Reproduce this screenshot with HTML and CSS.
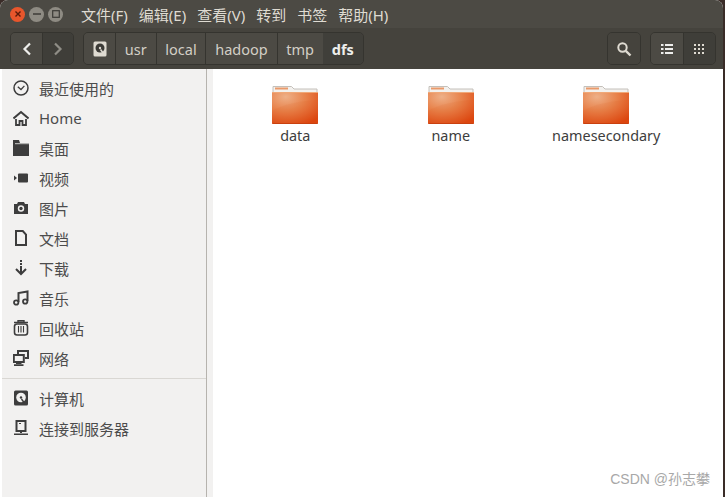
FILE: index.html
```html
<!DOCTYPE html>
<html lang="en">
<head>
    <meta charset="UTF-8">
    <title>dfs</title>
    <link rel="stylesheet" href="styles.css">
</head>
<body>
    <div class="window">
        <header class="menubar">
            <div class="win-btns">
                <span class="win-btn close"><svg width="8" height="8" viewBox="0 0 8 8"><path d="M1.5 1.5l5 5M6.5 1.5l-5 5" stroke="#5a1a0a" stroke-width="1.4"/></svg></span>
                <span class="win-btn"><svg width="8" height="8" viewBox="0 0 8 8"><path d="M0 4h8" stroke="#3c3b37" stroke-width="1.4"/></svg></span>
                <span class="win-btn"><svg width="8" height="8" viewBox="0 0 8 8"><rect x=".7" y=".7" width="6.6" height="6.6" fill="none" stroke="#3c3b37" stroke-width="1.2"/></svg></span>
            </div>
            <nav class="menu">
                <span>文件(F)</span>
                <span>编辑(E)</span>
                <span>查看(V)</span>
                <span>转到</span>
                <span>书签</span>
                <span>帮助(H)</span>
            </nav>
        </header>

        <div class="toolbar">
            <div class="btn-group nav-btns">
                <button class="tool-btn"><svg width="10" height="14" viewBox="0 0 10 14"><path d="M8 1.5L2.5 7 8 12.5" fill="none" stroke="#eeeeec" stroke-width="2.2"/></svg></button>
                <button class="tool-btn dim"><svg width="10" height="14" viewBox="0 0 10 14"><path d="M2 1.5L7.5 7 2 12.5" fill="none" stroke="#8f8d86" stroke-width="2.2"/></svg></button>
            </div>
            <div class="btn-group path">
                <button class="crumb disk"><svg width="14" height="16" viewBox="0 0 14 16"><rect x=".5" y=".5" width="13" height="15" rx="1.5" fill="#dfdbd2"/><circle cx="7" cy="7" r="4.5" fill="#3c3b37"/><circle cx="7" cy="7" r="1.2" fill="#dfdbd2"/><path d="M7.5 8.5l3 4" stroke="#dfdbd2" stroke-width="1.5"/></svg></button>
                <button class="crumb">usr</button>
                <button class="crumb">local</button>
                <button class="crumb">hadoop</button>
                <button class="crumb">tmp</button>
                <button class="crumb current">dfs</button>
            </div>
            <div class="spacer"></div>
            <div class="btn-group search">
                <button class="tool-btn"><svg width="16" height="16" viewBox="0 0 16 16"><circle cx="6.5" cy="6.5" r="4.2" fill="none" stroke="#dfdbd2" stroke-width="2"/><path d="M9.8 9.8L14.5 14.5" stroke="#dfdbd2" stroke-width="2.4"/></svg></button>
            </div>
            <div class="btn-group views">
                <button class="tool-btn"><svg width="12" height="10" viewBox="0 0 12 10" fill="#eeeeec"><rect x="0" y="0" width="2.5" height="2"/><rect x="4" y="0" width="8" height="2"/><rect x="0" y="4" width="2.5" height="2"/><rect x="4" y="4" width="8" height="2"/><rect x="0" y="8" width="2.5" height="2"/><rect x="4" y="8" width="8" height="2"/></svg></button>
                <button class="tool-btn dim"><svg width="11" height="10" viewBox="0 0 11 10" fill="#dfdbd2"><rect x="0" y="0" width="2" height="2"/><rect x="4" y="0" width="2" height="2"/><rect x="8" y="0" width="2" height="2"/><rect x="0" y="4" width="2" height="2"/><rect x="4" y="4" width="2" height="2"/><rect x="8" y="4" width="2" height="2"/><rect x="0" y="8" width="2" height="2"/><rect x="4" y="8" width="2" height="2"/><rect x="8" y="8" width="2" height="2"/></svg></button>
            </div>
        </div>

        <div class="content">
            <aside class="sidebar">
                <ul class="places">
                    <li><svg viewBox="0 0 16 16"><circle cx="8" cy="8" r="7" fill="none" stroke="#3d3d3d" stroke-width="1.5"/><path d="M4.8 6.8L8 9.5l3.4-3.6" fill="none" stroke="#3d3d3d" stroke-width="1.3"/></svg>最近使用的</li>
                    <li><svg viewBox="0 0 16 16"><path d="M0.5 8.5L8 2l7.5 6.5" fill="none" stroke="#3d3d3d" stroke-width="2"/><path d="M3 9v6h3.5v-4h3v4H13V9" fill="none" stroke="#3d3d3d" stroke-width="1.8"/></svg>Home</li>
                    <li><svg viewBox="0 0 16 16"><path d="M0 0h6l1 3h9v13H0z" fill="#3d3d3d"/><path d="M2 3.700h14" stroke="#f2f1f0" stroke-width=".8"/></svg>桌面</li>
                    <li><svg viewBox="0 0 16 16"><path d="M1 5.500l3 2.500-3 2.500z" fill="#3d3d3d"/><rect x="5" y="3.500" width="10" height="9" rx="1" fill="#3d3d3d"/></svg>视频</li>
                    <li><svg viewBox="0 0 16 16"><path d="M1 4h3l1-2h6l1 2h3v10H1z" fill="#3d3d3d"/><circle cx="8" cy="8.500" r="3.200" fill="#f2f1f0"/><circle cx="8" cy="8.500" r="1.700" fill="#3d3d3d"/></svg>图片</li>
                    <li><svg viewBox="0 0 16 16"><path d="M3 1h6.800l3.200 3.600V15H3z" fill="none" stroke="#3d3d3d" stroke-width="2"/></svg>文档</li>
                    <li><svg viewBox="0 0 16 16"><path d="M7 0h2v2H7zM7 3h2v2H7z" fill="#3d3d3d"/><path d="M8 6v7M3 9l5 5 5-5" fill="none" stroke="#3d3d3d" stroke-width="2"/></svg>下载</li>
                    <li><svg viewBox="0 0 16 16"><path d="M5.500 12V3l9-1.500V11" fill="none" stroke="#3d3d3d" stroke-width="2"/><circle cx="3.200" cy="12.500" r="2.200" fill="none" stroke="#3d3d3d" stroke-width="1.800"/><circle cx="12.200" cy="11.500" r="2.200" fill="none" stroke="#3d3d3d" stroke-width="1.800"/></svg>音乐</li>
                    <li><svg viewBox="0 0 16 16"><path d="M5 2V0.700h6V2M1 2.500h14" fill="none" stroke="#3d3d3d" stroke-width="1.400"/><rect x="1.500" y="4" width="13" height="11" rx="2.500" fill="none" stroke="#3d3d3d" stroke-width="1.600"/><path d="M5.500 6v6.500M8 6v6.500M10.500 6v6.500" stroke="#3d3d3d" stroke-width="1.100"/></svg>回收站</li>
                    <li><svg viewBox="0 0 16 16"><rect x="0.800" y="5" width="10" height="7" fill="none" stroke="#3d3d3d" stroke-width="2"/><path d="M3 12h5.500v2H3zM1 14.300h9.500V16H1z" fill="#3d3d3d"/><path d="M5 4V1h10v7h-3" fill="none" stroke="#3d3d3d" stroke-width="2"/></svg>网络</li>
                </ul>
                <ul class="places devices">
                    <li><svg viewBox="0 0 16 16"><rect x="1" y="0.500" width="14" height="15" rx="1.500" fill="#3d3d3d"/><circle cx="8" cy="7.500" r="4.800" fill="#f2f1f0"/><circle cx="8" cy="7.500" r="1.200" fill="#3d3d3d"/><path d="M8.500 9l2.500 3.500" stroke="#3d3d3d" stroke-width="1.400"/></svg>计算机</li>
                    <li><svg viewBox="0 0 16 16"><rect x="3.500" y="1" width="9" height="10" fill="none" stroke="#3d3d3d" stroke-width="2"/><path d="M6 3.500h2" stroke="#3d3d3d" stroke-width="1.200"/><path d="M7 11h2v2H7zM1 13.500h14V15H1z" fill="#3d3d3d"/></svg>连接到服务器</li>
                </ul>
            </aside>
            <div class="gutter"></div>
            <main class="files">
                <div class="file">
                    <svg class="folder" viewBox="0 0 46 40"><use href="#folder-art"/></svg>
                    <span>data</span>
                </div>
                <div class="file">
                    <svg class="folder" viewBox="0 0 46 40"><use href="#folder-art"/></svg>
                    <span>name</span>
                </div>
                <div class="file">
                    <svg class="folder" viewBox="0 0 46 40"><use href="#folder-art"/></svg>
                    <span>namesecondary</span>
                </div>
                <p class="watermark">CSDN @孙志攀</p>
            </main>
        </div>
    </div>

    <svg width="0" height="0" class="defs">
        <defs>
            <radialGradient id="folder-fill" cx=".3" cy=".15" r=".95">
                <stop offset="0" stop-color="#eeb088"/>
                <stop offset=".45" stop-color="#e8834c"/>
                <stop offset="1" stop-color="#dd4610"/>
            </radialGradient>
            <g id="folder-art">
                <path d="M1 9V1.500h18.500l2.500 2.500H45v5z" fill="#f3f1ee" stroke="#c4c0ba"/>
                <rect x="3" y="2.500" width="13" height="2" fill="#ea9a6a"/>
                <rect x="0" y="7" width="46" height="32" rx="1" fill="url(#folder-fill)"/>
                <path d="M0 7.500h46" stroke="#f0a878"/>
                <path d="M0 26c14-8 30-10 46-11v23.500H0z" fill="#df4a12" opacity=".08"/>
                <path d="M0.500 38.500h45" stroke="#c9400f"/>
            </g>
        </defs>
    </svg>
</body>
</html>
```

FILE: styles.css
```css
*{
    margin: 0;
    padding: 0;
    box-sizing: border-box;
}
html, body{
    height: 100%;
    overflow: hidden;
}
body{
    background-color: #3a2c28;
    font-family: "Noto Sans", "Noto Sans CJK SC", sans-serif;
    font-size: 14px;
    padding: 0 2px 0 2px;
}
button{
    font-family: inherit;
    cursor: pointer;
}
ul{
    list-style: none;
}
.defs{
    position: absolute;
}
.window{
    height: 497px;
    display: flex;
    flex-direction: column;
    background-color: white;
    border-radius: 8px 8px 0 0;
    overflow: hidden;
    margin-left: -2px;
}
.menubar{
    height: 28px;
    display: flex;
    align-items: center;
    background-color: #4c4a44;
    color: #dfdbd2;
    padding-left: 10px;
}
.win-btns{
    display: flex;
    gap: 4px;
    width: 71px;
}
.win-btn{
    width: 15px;
    height: 15px;
    border-radius: 50%;
    background-color: #8e8b83;
    display: flex;
    justify-content: center;
    align-items: center;
}
.win-btn.close{
    background-color: #e8562c;
}
.menu{
    display: flex;
    gap: 11px;
    font-size: 15px;
}
.toolbar{
    height: 41px;
    display: flex;
    align-items: center;
    gap: 9px;
    background-color: #45433d;
    padding: 0 7px 0 10px;
}
.spacer{
    flex: 1;
}
.btn-group{
    height: 33px;
    display: flex;
    border: 1px solid #35342f;
    border-radius: 5px;
    overflow: hidden;
}
.tool-btn{
    width: 32px;
    height: 100%;
    display: flex;
    justify-content: center;
    align-items: center;
    border: none;
    background-color: #4c4a44;
}
.tool-btn.dim{
    background-color: #3f3e39;
    border-left: 1px solid #35342f;
}
.nav-btns .tool-btn{
    width: 31px;
}
.search .tool-btn{
    background-color: #45433d;
}
.crumb{
    height: 100%;
    padding: 0 8.8px;
    border: none;
    border-left: 1px solid #35342f;
    background-color: #4c4a44;
    color: #d3cfc6;
    font-size: 14.5px;
}
.crumb.disk{
    border-left: none;
    width: 31px;
    padding: 0;
    display: flex;
    justify-content: center;
    align-items: center;
}
.crumb.current{
    background-color: #403f3a;
    border-left: none;
    padding: 0 9px;
    color: #eeeeec;
    font-weight: 700;
}
.content{
    flex: 1;
    display: flex;
    background-color: #f2f1f0;
    margin-left: 2px;
}
.sidebar{
    width: 205px;
    border-right: 1px solid #b6b3ae;
    color: #4c4c4c;
    padding-top: 4px;
}
.places li{
    height: 30px;
    display: flex;
    align-items: center;
    padding-left: 11px;
    gap: 10px;
    font-size: 15px;
}
.places svg{
    width: 16px;
    height: 16px;
}
.devices{
    margin-top: 5px;
    border-top: 1px solid #d9d7d3;
    padding-top: 4px;
}
.gutter{
    width: 6px;
}
.files{
    flex: 1;
    position: relative;
    background-color: white;
    display: flex;
    align-items: flex-start;
    padding: 16px 0 0 4.5px;
}
.file{
    width: 155.5px;
    display: flex;
    flex-direction: column;
    align-items: center;
    color: #3d3d3d;
    font-size: 14.4px;
}
.folder{
    width: 46px;
    height: 40px;
    margin-bottom: 1px;
}
.watermark{
    position: absolute;
    right: 13px;
    bottom: 9px;
    font-family: "Liberation Sans", "Noto Sans CJK SC", sans-serif;
    font-size: 14px;
    color: #a8a8a8;
}
```
